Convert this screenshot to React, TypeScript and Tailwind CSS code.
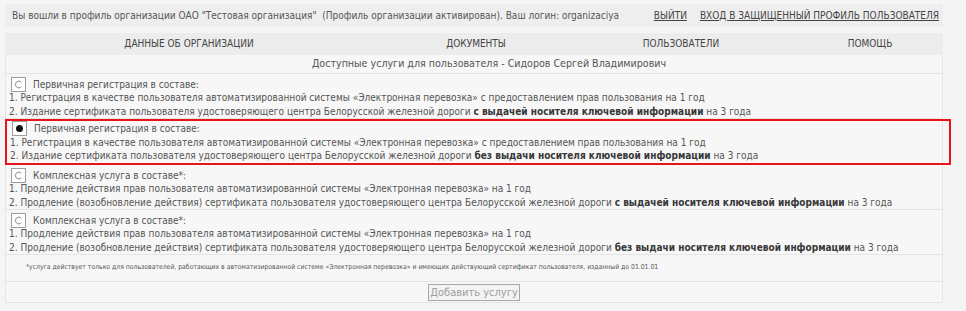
import React from "react";

type Service = {
  title: string;
  line1: string;
  line2a: string;
  bold: string;
  line2b: string;
  checked?: boolean;
  highlight?: boolean;
};

const services: Service[] = [
  {
    title: "Первичная регистрация в составе:",
    line1: "1. Регистрация в качестве пользователя автоматизированной системы «Электронная перевозка» с предоставлением прав пользования на 1 год",
    line2a: "2. Издание сертификата пользователя удостоверяющего центра Белорусской железной дороги ",
    bold: "с выдачей носителя ключевой информации",
    line2b: " на 3 года",
  },
  {
    title: "Первичная регистрация в составе:",
    line1: "1. Регистрация в качестве пользователя автоматизированной системы «Электронная перевозка» с предоставлением прав пользования на 1 год",
    line2a: "2. Издание сертификата пользователя удостоверяющего центра Белорусской железной дороги ",
    bold: "без выдачи носителя ключевой информации",
    line2b: " на 3 года",
    checked: true,
    highlight: true,
  },
  {
    title: "Комплексная услуга в составе*:",
    line1: "1. Продление действия прав пользователя автоматизированной системы «Электронная перевозка» на 1 год",
    line2a: "2. Продление (возобновление действия) сертификата пользователя удостоверяющего центра Белорусской железной дороги ",
    bold: "с выдачей носителя ключевой информации",
    line2b: " на 3 года",
  },
  {
    title: "Комплексная услуга в составе*:",
    line1: "1. Продление действия прав пользователя автоматизированной системы «Электронная перевозка» на 1 год",
    line2a: "2. Продление (возобновление действия) сертификата пользователя удостоверяющего центра Белорусской железной дороги ",
    bold: "без выдачи носителя ключевой информации",
    line2b: " на 3 года",
  },
];

const Radio = ({ checked }: { checked?: boolean }) => (
  <span className="w-[15px] h-[15px] border border-[#9c9c9c] bg-white flex items-center justify-center shrink-0 ml-[2px]">
    {checked ? (
      <span className="w-[7px] h-[7px] rounded-full bg-[#111]" />
    ) : (
      <svg width="9" height="9" viewBox="0 0 9 9">
        <path d="M7.3 2.2 A3.4 3.4 0 1 0 7.3 6.8" fill="none" stroke="#8a8a8a" strokeWidth="1" />
      </svg>
    )}
  </span>
);

const ServiceRow = ({ s }: { s: Service }) => (
  <div
    className={
      s.highlight
        ? "border-2 border-[#e8141c] mr-[-9px] ml-[-1px] px-[3px] pt-[1px] pb-[0.5px]"
        : "border-b border-[#e4e4e4] px-[3px] pt-[3.5px]"
    }
  >
    <div className="flex items-center gap-[7px] h-[13.5px]">
      <Radio checked={s.checked} />
      <span>{s.title}</span>
    </div>
    <div className="h-[13.5px] leading-[13.5px] whitespace-nowrap">{s.line1}</div>
    <div className="h-[13.5px] leading-[13.5px] whitespace-nowrap">
      {s.line2a}
      <b className="text-[#383838]">{s.bold}</b>
      {s.line2b}
    </div>
  </div>
);

export default function App() {
  return (
    <div
      className="w-[966px] h-[311px] bg-[#f5f5f5] overflow-hidden text-[#555] text-[10px] leading-[13.5px]"
      style={{ fontFamily: "'DejaVu Sans Condensed', 'DejaVu Sans', sans-serif" }}
    >
      <div className="w-[938px] ml-[5px] pt-[4px]">
        <div className="h-[23px] bg-[#eeeeee] flex items-center pl-[7px] pr-[4px]">
          <span className="flex-1 whitespace-nowrap">
            Вы вошли в профиль организации ОАО "Тестовая организация"&nbsp; (Профиль организации активирован). Ваш логин: organizaciya
          </span>
          <a className="underline text-[#444] mr-[13px] whitespace-nowrap" href="#">ВЫЙТИ</a>
          <a className="underline text-[#444] whitespace-nowrap" href="#">ВХОД В ЗАЩИЩЕННЫЙ ПРОФИЛЬ ПОЛЬЗОВАТЕЛЯ</a>
        </div>
        <div className="mt-[6px] h-[22px] bg-[#ececec] grid grid-cols-[368px_206px_204px_160px] items-center text-center text-[#444]">
          <span>ДАННЫЕ ОБ ОРГАНИЗАЦИИ</span>
          <span>ДОКУМЕНТЫ</span>
          <span>ПОЛЬЗОВАТЕЛИ</span>
          <span className="pl-[14px]">ПОМОЩЬ</span>
        </div>
        <div className="border-x border-[#e6e6e6] bg-[#f7f7f7]">
          <div className="h-[19px] flex items-center justify-center pl-[30px] border-b border-[#e4e4e4] text-[10.6px]">
            Доступные услуги для пользователя - Сидоров Сергей Владимирович
          </div>
          {services.map((s, i) => (
            <ServiceRow key={i} s={s} />
          ))}
          <div className="h-[27px] flex items-center pl-[20px] text-[6.8px] border-b border-[#e4e4e4] whitespace-nowrap">
            *услуга действует только для пользователей, работающих в автоматизированной системе «Электронная перевозка» и имеющих действующий сертификат пользователя, изданный до 01.01.01
          </div>
          <div className="h-[21px] flex items-center justify-center border-b border-[#e4e4e4]">
            <button
              disabled
              className="h-[17px] w-[92px] border border-[#a8a8a8] bg-[#f3f3f3] text-[#a0a0a0] text-[11px] leading-none"
            >
              Добавить услугу
            </button>
          </div>
        </div>
      </div>
    </div>
  );
}
